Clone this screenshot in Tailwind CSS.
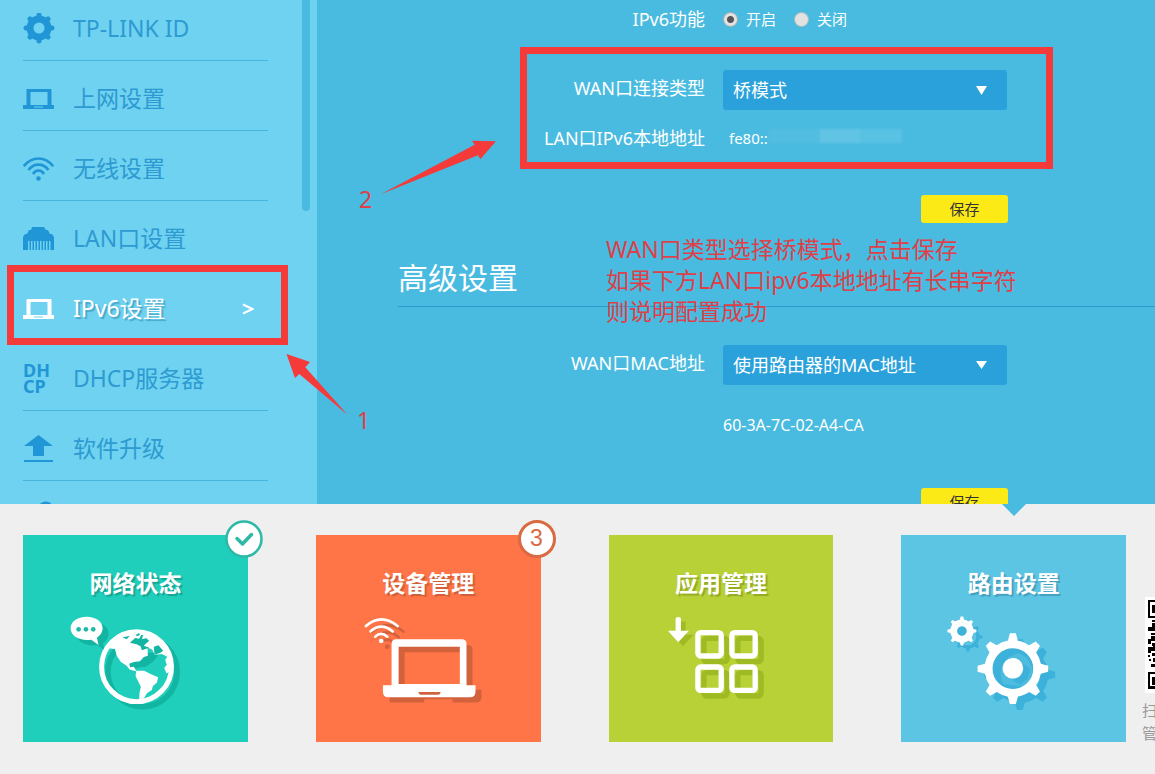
<!DOCTYPE html>
<html lang="zh-CN">
<head>
<meta charset="utf-8">
<meta name="viewport" content="width=device-width, initial-scale=1">
<title>路由设置</title>
<script src="https://cdn.jsdelivr.net/npm/@tailwindcss/browser@4"></script>
</head>
<body class="flex h-screen flex-col overflow-hidden bg-[#efefef] font-['Noto_Sans','Noto_Sans_CJK_SC',sans-serif]">

<svg class="hidden" aria-hidden="true">
  <defs>
    <symbol id="laptop" viewBox="0 0 32 22">
      <path fill-rule="evenodd" d="M3.500 2q0-1 1-1h23q1 0 1 1v15h2.500v4H0v-4h3.500zM7.500 4v13h17V4zM11 18.500h9v1h-9z"/>
    </symbol>
    <g id="tooth"><path d="M-15-84L-9-106H9L15-84L24-70H-24z"/></g>
    <g id="gear">
      <circle r="73" fill="none" stroke="currentColor" stroke-width="24"/>
      <g fill="currentColor">
        <use href="#tooth"/><use href="#tooth" transform="rotate(45)"/><use href="#tooth" transform="rotate(90)"/><use href="#tooth" transform="rotate(135)"/>
        <use href="#tooth" transform="rotate(180)"/><use href="#tooth" transform="rotate(225)"/><use href="#tooth" transform="rotate(270)"/><use href="#tooth" transform="rotate(315)"/>
      </g>
    </g>
  </defs>
</svg>

<div class="relative flex min-h-0 flex-1 overflow-hidden bg-[#4abbe0]">
  <nav class="relative w-[317px] shrink-0 overflow-hidden bg-[#6fd2f0] pl-[23px] text-[23px] text-[#2d9ad2]">
    <ul class="-mt-[9px] w-[245px]">
      <li class="h-[70px] border-b border-[#45b5de] pt-[6px]">
        <a href="#" class="flex h-[63px] items-center gap-[18px]">
          <svg class="h-8 w-8 text-[#2196d6]" viewBox="-16 -15 32 32"><circle r="9" fill="none" stroke="currentColor" stroke-width="7"/><path d="M0-13V-10M0 13V10M-13 0H-10M13 0H10M-9-9L-8-8M9 9L8 8M-9 9L-8 8M9-9L8-8" stroke="currentColor" stroke-width="5" stroke-linecap="round"/></svg>
          <span>TP-LINK ID</span>
        </a>
      </li>
      <li class="h-[70px] border-b border-[#45b5de] pt-[6px]">
        <a href="#" class="flex h-[63px] items-center gap-[18px]">
          <svg class="h-[22px] w-8 fill-[#2196d6]"><use href="#laptop"/></svg>
          <span>上网设置</span>
        </a>
      </li>
      <li class="h-[70px] border-b border-[#45b5de] pt-[6px]">
        <a href="#" class="flex h-[63px] items-center gap-[18px]">
          <svg class="h-6 w-8" viewBox="0 0 32 24" fill="none" stroke="#2196d6" stroke-width="2.600"><path d="M.8 9.200Q7 1.500 15.500 1.500T30.200 9.200M5.500 13Q9.500 7.600 15.500 7.600T25.500 13M10 17Q12 13.500 15.500 13.500T21 17"/><circle cx="15.500" cy="21.500" r="2.300" fill="#2196d6" stroke="none"/></svg>
          <span>无线设置</span>
        </a>
      </li>
      <li class="h-[70px] border-b border-[#45b5de] pt-[6px]">
        <a href="#" class="flex h-[63px] items-center gap-[18px]">
          <svg class="h-6 w-8" viewBox="0 0 32 24" fill="#2196d6"><path d="M9 0H21L23 3H25L27 7H29L31 10V23H27.500V14H26V23H24.500V14H23V23H21.500V14H20V23H18.500V14H17V23H15.500V14H14V23H12.500V14H11V23H9.500V14H8V23H6.500V14H5V23H0V10L2 7H4L6 3H8z"/></svg>
          <span>LAN口设置</span>
        </a>
      </li>
      <li class="h-[70px] border-b border-[#45b5de] pt-[6px] text-white [text-shadow:2px_2px_1px_#4aa6c8]">
        <a href="#" class="flex h-[63px] items-center gap-[18px]">
          <svg class="h-[22px] w-8 fill-white"><use href="#laptop"/></svg>
          <span>IPv6设置</span>
          <svg class="mr-[14px] ml-auto h-3 w-3" viewBox="0 0 12 12" fill="none" stroke="white" stroke-width="2"><path d="M1 1.500L10.500 6L1 10.500"/></svg>
        </a>
      </li>
      <li class="h-[70px] border-b border-[#45b5de] pt-[6px]">
        <a href="#" class="flex h-[63px] items-center gap-[18px]">
          <svg class="h-8 w-8 fill-[#2196d6] text-[18px] font-bold" viewBox="0 0 32 32" aria-hidden="true"><text x="0" y="14">DH</text><text x="0" y="30">CP</text></svg>
          <span>DHCP服务器</span>
        </a>
      </li>
      <li class="h-[70px] border-b border-[#45b5de] pt-[6px]">
        <a href="#" class="flex h-[63px] items-center gap-[18px]">
          <svg class="h-7 w-8" viewBox="0 0 32 28" fill="#2196d6"><path d="M15.500 0L30 11H21V21H10V11H1zM1 25H30V27H1z"/></svg>
          <span>软件升级</span>
        </a>
      </li>
      <li class="h-[70px] pt-[20px]">
        <svg class="h-8 w-8" viewBox="0 0 32 32" fill="none" stroke="#2196d6" stroke-width="4"><path d="M4 28L18 14M16 10A7 7 0 0 1 27 4"/></svg>
      </li>
    </ul>
    <div class="absolute top-0 right-[7px] h-[211px] w-2 rounded-b bg-[#4abbe0]"></div>
  </nav>

  <main class="min-w-0 flex-1 text-[18px] text-white">
    <form>
      <fieldset class="flex h-[38px] items-center">
        <legend class="float-left w-[388px] text-right">IPv6功能</legend>
        <span class="ml-[18px] flex items-center gap-[18px] text-[15px]">
          <label class="flex items-center gap-2"><input type="radio" name="ipv6" checked class="h-[15px] w-[15px] appearance-none rounded-full border border-[#9dabb2] bg-[#e2e2e2] checked:bg-[radial-gradient(circle,#555_0_3px,#e2e2e2_4px)]">开启</label>
          <label class="flex items-center gap-2"><input type="radio" name="ipv6" class="h-[15px] w-[15px] appearance-none rounded-full border border-[#a9b9c0] bg-[#e2e2e2]">关闭</label>
        </span>
      </fieldset>
      <div class="mt-8 flex h-10 items-center gap-[18px]">
        <label for="wan" class="w-[388px] shrink-0 pb-[3px] text-right">WAN口连接类型</label>
        <span class="relative w-[284px]">
          <select id="wan" class="block h-10 w-full appearance-none rounded-[3px] bg-[#2aa1da] pl-[10px]"><option>桥模式</option></select>
          <svg class="pointer-events-none absolute top-4 right-5 h-[9px] w-[11px] fill-white" viewBox="0 0 11 9"><path d="M0 0H11L5.500 9z"/></svg>
        </span>
      </div>
      <div class="mt-2 flex h-10 items-center">
        <span class="w-[388px] shrink-0 text-right">LAN口IPv6本地地址</span>
        <span class="ml-6 text-[15px]">fe80::</span>
        <span class="mb-1 flex h-[14px] w-[134px] opacity-60 blur-[1px]"><i class="w-[52px] bg-[#55bfe2]"></i><i class="w-[40px] bg-[#72cbe8]"></i><i class="w-[42px] bg-[#64c5e5]"></i></span>
      </div>
      <div class="mt-[37px] flex w-[691px] justify-end">
        <button type="button" class="h-7 w-[87px] rounded-[3px] bg-[#fbea16] text-[15px] text-[#333]">保存</button>
      </div>
    </form>
    <form>
      <h2 class="mt-[33px] ml-[81px] h-[51px] border-b border-[#2a9dd0] text-[30px] leading-[44px]">高级设置</h2>
      <div class="mt-[38px] flex h-10 items-center gap-[18px]">
        <label for="mac" class="w-[388px] shrink-0 pb-[3px] text-right">WAN口MAC地址</label>
        <span class="relative w-[284px]">
          <select id="mac" class="block h-10 w-full appearance-none rounded-[3px] bg-[#2aa1da] pl-[10px]"><option>使用路由器的MAC地址</option></select>
          <svg class="pointer-events-none absolute top-4 right-5 h-2 w-[11px] fill-white" viewBox="0 0 11 8"><path d="M0 0H11L5.500 8z"/></svg>
        </span>
      </div>
      <p class="mt-7 ml-[406px] text-[16px] leading-6">60-3A-7C-02-A4-CA</p>
      <div class="mt-[51px] flex w-[691px] justify-end">
        <button type="button" class="h-7 w-[87px] rounded-[3px] bg-[#fbea16] text-[15px] text-[#333]">保存</button>
      </div>
    </form>
  </main>

  <!-- Red guide marks over the settings page -->
  <div class="pointer-events-none absolute inset-0 text-[23px] leading-[31px] text-[#de3f48]">
    <div class="absolute top-[265px] left-[7px] h-20 w-[281px] border-[7px] border-[#f53a3a]"></div>
    <div class="absolute top-[47px] left-[520px] h-[122px] w-[533px] border-[7px] border-[#f53a3a]"></div>
    <svg class="absolute top-0 left-0 h-[504px] w-[510px] fill-[#f53a3a]" viewBox="0 0 510 504"><path d="M286.500 354L310 362L305.300 367.300L347.700 415L299.300 374L295 378zM496 141.300L472 140.700L474.700 144.700L380.700 194.300L478 155.300L480.300 159.300z"/></svg>
    <span class="absolute top-[184px] left-[359px]">2</span>
    <span class="absolute top-[405px] left-[357px]">1</span>
    <p class="absolute top-[234px] left-[606px] whitespace-nowrap">WAN口类型选择桥模式，点击保存<br>如果下方LAN口ipv6本地地址有长串字符<br>则说明配置成功</p>
  </div>
</div>

<footer class="flex shrink-0 pt-[31px] pb-8 pl-[23px]">
  <nav class="grid flex-1 grid-cols-4 gap-[68px] text-center text-[23px] leading-8 font-bold text-white">
    <a href="#" class="relative h-[207px] bg-[#1fcfbb] pt-8">
      <span class="[text-shadow:2px_2px_1px_#17a595]">网络状态</span>
      <svg class="mt-4 h-[100px] w-full" viewBox="9 315 675 300">
        <g fill="#12b5a2" transform="translate(18 16)">
          <path d="M200 320c28 0 48 15 48 35 0 12-7 22-17 28l5 22-22-16c-34 5-62-10-62-34 0-20 20-35 48-35z"/>
          <circle cx="350" cy="470" r="104" fill="none" stroke="#12b5a2" stroke-width="17"/>
          <path d="M330 412L384 412L397 419L384 437L360 454L342 456L328 461L318 466L303 456L291 438z"/>
        </g>
        <g fill="#fff">
          <path d="M200 320c28 0 48 15 48 35 0 12-7 22-17 28l5 22-22-16c-34 5-62-10-62-34 0-20 20-35 48-35z"/>
          <circle cx="350" cy="470" r="105" fill="none" stroke="#fff" stroke-width="15"/>
          <path d="M266 415L282 394L306 376L350 362L385 366L402 384L422 400L440 425L450 448L456 484L440 490L433 474L441 464L436 450L442 440L426 432L405 434L397 419L383 412L384 437L372 441L360 454L342 456L328 461L331 472L342 470L349 482L373 482L392 492L415 502L411 518L399 528L396 540L382 549L370 568L358 568L359 548L363 530L354 512L347 498L349 484L330 479L318 466L303 456L291 438L285 417z"/>
        </g>
        <g fill="#12b5a2"><path d="M330 398l16-14 12 2 6-11h6l-4 12 14-2 8 8-8 6-8 8 16 6-22 8-4-12-12-6zM402 410l14-4 14 16-8 6-18 6zM308 382l22-4-10 10zM348 374l10-5 2 6-9 4z"/></g>
        <g fill="#1fb9a8"><circle cx="176" cy="358" r="7"/><circle cx="198" cy="358" r="7"/><circle cx="220" cy="358" r="7"/></g>
      </svg>
      <svg class="absolute -top-[15px] -right-[15px] h-[38px] w-[38px]" viewBox="0 0 38 38" fill="none" stroke="#2cb9a5"><circle cx="19" cy="19" r="17.500" fill="#fff" stroke-width="2.500"/><path d="M12 18.500L17.500 24L26.500 14.500" stroke-width="3.500" stroke-linecap="round" stroke-linejoin="round"/></svg>
    </a>
    <a href="#" class="relative h-[207px] bg-[#ff7547] pt-8">
      <span class="[text-shadow:2px_2px_1px_#cf5f3a]">设备管理</span>
      <svg class="mt-4 h-[100px] w-full" viewBox="18 315 675 300">
        <g transform="translate(18 17)" fill="#d1623c" stroke="#d1623c">
          <path d="M247 522V402q0-14 14-14H456q14 0 14 14V522H497V545q0 16-16 16H410v-10H325v10H221V522zM266 410V522H450V410z" fill-rule="evenodd" stroke="none"/>
          <path d="M168 348Q214 308 263 348M182 364Q214 336 248 364M196 380Q214 363 232 380" fill="none" stroke-width="8" stroke-linecap="round"/><circle cx="214" cy="393" r="7" stroke="none"/>
        </g>
        <g fill="#fff" stroke="#fff">
          <path d="M245 526V402q0-14 14-14H456q14 0 14 14V526H497V545q0 17-17 17H236q-17 0-17-17V526zM266 410V522H450V410zM326 546q0 8 8 8H384q8 0 8-8z" fill-rule="evenodd" stroke="none"/>
          <path d="M168 348Q214 308 263 348M182 364Q214 336 248 364M196 380Q214 363 232 380" fill="none" stroke-width="8" stroke-linecap="round"/><circle cx="214" cy="393" r="7" stroke="none"/>
        </g>
      </svg>
      <span class="absolute -top-[15px] -right-[15px] flex h-[38px] w-[38px] items-center justify-center rounded-full border-[3px] border-[#d96a42] bg-white pb-[2px] font-['Liberation_Sans',sans-serif] font-normal text-[#d96a42]">3</span>
    </a>
    <a href="#" class="relative h-[207px] bg-[#b8d137] pt-8">
      <span class="[text-shadow:2px_2px_1px_#93aa25]">应用管理</span>
      <svg class="mt-4 h-[100px] w-full" viewBox="25 255 675 300">
        <g transform="translate(18 17)" fill="none" stroke="#9fbb24" stroke-width="16"><rect x="292" y="308" width="70" height="70" rx="8"/><rect x="394" y="308" width="70" height="70" rx="8"/><rect x="292" y="411" width="70" height="70" rx="8"/><rect x="394" y="411" width="70" height="70" rx="8"/></g>
        <path transform="translate(14 12)" fill="#9fbb24" d="M225 262h16v40h24l-32 35-31-35h23z"/>
        <g fill="none" stroke="#fff" stroke-width="16"><rect x="292" y="308" width="70" height="70" rx="8"/><rect x="394" y="308" width="70" height="70" rx="8"/><rect x="292" y="411" width="70" height="70" rx="8"/><rect x="394" y="411" width="70" height="70" rx="8"/></g>
        <path fill="#fff" d="M225 266q0-5 8-5t8 5v36h24l-32 35-31-35h23z"/>
      </svg>
    </a>
    <a href="#" class="relative h-[207px] bg-[#5dc5e4] pt-8">
      <svg class="absolute -top-[31px] left-1/2 h-3 w-6 -translate-x-1/2 fill-[#4abbe0]" viewBox="0 0 24 12"><path d="M0 0H24L12 12z"/></svg>
      <span class="[text-shadow:2px_2px_1px_#459fbd]">路由设置</span>
      <svg class="mt-4 h-[100px] w-full" viewBox="19 405 675 300">
        <g class="text-[#3cb2da]"><use href="#gear" transform="translate(376 584)"/><circle cx="376" cy="584" r="31" fill="currentColor"/><use href="#gear" transform="translate(220 471) scale(.410)"/></g>
        <circle cx="356" cy="566" r="62" fill="#3cb2da"/><path d="M326 612a62 62 0 0 1 48-92 62 62 0 0 1 40 62 62 62 0 0 1-30 38z" fill="#5dc5e4" opacity=".55"/>
        <path d="M376 545l32 22-10 30-22 18-32-22z" fill="#3cb2da"/>
        <g class="text-white"><use href="#gear" transform="translate(355 566)"/><circle cx="355" cy="565" r="31" fill="currentColor"/><use href="#gear" transform="translate(202 453) scale(.410)"/><circle cx="202" cy="453" r="20" fill="none" stroke="currentColor" stroke-width="12"/></g>
        <circle cx="202" cy="453" r="14" fill="#3fb2d8"/>
      </svg>
    </a>
  </nav>
  <aside class="-mb-4 ml-4 w-[13px] overflow-hidden pt-[62px] text-[15px] leading-[23px] text-[#999]">
    <svg class="ml-[3px] h-24 w-[10px] bg-white" viewBox="0 0 10 96"><path d="M3 3h7v2H5v14h5v2H3zM7 8h3v8H7zM3 30h4v-4h3v8H3zM7 23h3v2H7zM6 36h4v2H6zM3 42h3v-3h4v5H6v3H3zM7 46h3v3H7zM3 50h5v-1h2v5H6v2H3zM3 58h2v2H3zM7 56h3v3H7zM4 62h2v2H4zM8 61h2v4H8zM6 67h4v3H6zM3 75h7v2H5v12h5v3H3zM7 80h3v8H7z"/></svg>
    <p class="mt-[6px] w-4">扫管</p>
  </aside>
</footer>
</body>
</html>
